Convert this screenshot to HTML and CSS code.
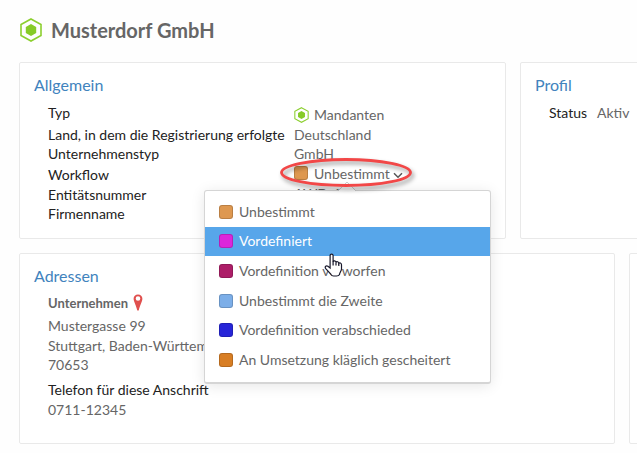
FILE: index.html
```html
<!DOCTYPE html>
<html lang="de">
<head>
<meta charset="utf-8">
<title>Musterdorf GmbH</title>
<link rel="stylesheet" href="styles.css">
</head>
<body>
<header class="page-head">
  <svg class="hex hex-large" viewBox="0 0 22 24"><path class="hex-line" d="M11 1 21 6.5V17.5L11 23 1 17.5V6.5Z"/><path class="hex-core" d="M11 6 16.2 9V15L11 18 5.8 15V9Z"/></svg>
  <h1>Musterdorf GmbH</h1>
</header>
<main>
  <div class="row row-general">
    <section class="card">
      <h2>Allgemein</h2>
      <dl class="fields">
        <dt>Typ</dt>
        <dd class="type-value"><svg class="hex" viewBox="0 0 22 24"><path class="hex-line" d="M11 1 21 6.5V17.5L11 23 1 17.5V6.5Z"/><path class="hex-core" d="M11 6 16.2 9V15L11 18 5.8 15V9Z"/></svg>Mandanten</dd>
        <dt>Land, in dem die Registrierung erfolgte</dt><dd>Deutschland</dd>
        <dt>Unternehmenstyp</dt><dd>GmbH</dd>
        <dt class="workflow-label">Workflow</dt>
        <dd class="workflow"><span class="swatch orange"></span><span class="state">Unbestimmt</span><svg class="chevron" viewBox="0 0 10 7"><path d="M1 1.2 5 5.2 9 1.2"/></svg>
          <svg class="ring" viewBox="0 0 144 42"><ellipse cx="70" cy="16.5" rx="64.5" ry="13"/></svg>
          <div class="menu">
            <svg class="menu-tip" viewBox="0 0 20 10"><path d="M1 10 10 1 19 10"/></svg>
            <div class="item"><span class="swatch orange"></span>Unbestimmt</div>
            <div class="item selected"><span class="swatch magenta"></span>Vordefiniert</div>
            <div class="item"><span class="swatch crimson"></span>Vordefinition verworfen</div>
            <div class="item"><span class="swatch sky"></span>Unbestimmt die Zweite</div>
            <div class="item"><span class="swatch blue"></span>Vordefinition verabschieded</div>
            <div class="item"><span class="swatch amber"></span>An Umsetzung kläglich gescheitert</div>
            <svg class="cursor" viewBox="0 0 19 25"><path d="M6.1 15V2.8C6.1.5 9.1.5 9.1 2.8V9C9.4 7.4 12 7.6 12 9.5 12.5 8.2 14.8 8.6 14.8 10.4 15.5 9.4 17.5 9.9 17.5 11.8V16C17.5 18 15.5 19.5 15.5 21.5 15 22.5 14 23 12.5 23H9.5C8 23 7.4 22.2 6.8 21.2L1.7 15.6C.3 13.6 2.4 12.1 3.9 13.3Z"/><path d="M9.1 8.5V12.5M12 9.5V12.5M14.8 10.4V13"/></svg>
          </div>
        </dd>
        <dt>Entitätsnummer</dt><dd class="entity-value">AWD-1</dd>
        <dt>Firmenname</dt><dd></dd>
      </dl>
    </section>
    <section class="card">
      <h2>Profil</h2>
      <dl class="status"><dt>Status</dt><dd>Aktiv</dd></dl>
    </section>
  </div>
  <div class="row row-address">
    <section class="card">
      <h2>Adressen</h2>
      <div class="address">
        <h3>Unternehmen <svg class="pin" viewBox="0 0 10 17"><path fill-rule="evenodd" d="M5 .5C2.4.5.6 2.4.6 4.8.6 7.3 3.2 11.8 4.3 16.5H5.7C6.8 11.8 9.4 7.3 9.4 4.8 9.4 2.4 7.6.5 5 .5ZM5 2.2A2.3 2.3 0 1 1 5 6.8 2.3 2.3 0 0 1 5 2.2Z"/></svg></h3>
        <p class="street">Mustergasse 99</p>
        <p>Stuttgart, Baden-Württemberg</p>
        <p class="postcode">70653</p>
        <p class="phone-label">Telefon für diese Anschrift</p>
        <p>0711-12345</p>
      </div>
    </section>
    <section class="card"></section>
  </div>
</main>
</body>
</html>
```
FILE: styles.css
```css
* { box-sizing: border-box; }
body {
  margin: 0;
  width: 637px;
  height: 453px;
  overflow: hidden;
  background: #fefefe;
  color: #666;
  font: 14px/20px Lato, sans-serif;
}
h1, h2, h3, p, dl, dd { margin: 0; }
svg { display: block; flex: none; }
.page-head {
  display: flex;
  align-items: center;
  gap: 9px;
  height: 62px;
  padding: 0 0 2px 20px;
}
h1 { font-size: 20px; line-height: 24px; font-weight: 700; }
.hex { width: 15px; height: 16px; }
.hex-large { width: 22px; height: 24px; }
.hex-line { fill: none; stroke: #8ccf2f; stroke-width: 1.6; }
.hex-core { fill: #86cb27; }
.row { display: grid; column-gap: 14px; }
.row-general { grid-template-columns: 487px 130px; height: 177px; margin: 0 0 14px 19px; }
.row-address { grid-template-columns: 596px 30px; height: 191px; margin-left: 19px; }
.card { border: 1px solid #e9e9e9; border-radius: 2px; background: #fff; padding: 11px 14px; }
h2 { color: #4183bd; font-size: 16px; line-height: 22px; font-weight: 400; }
.fields {
  display: grid;
  grid-template-columns: 246px 1fr;
  grid-template-rows: 22px 19px 20px 21px 19px 20px;
  padding: 7px 0 0 14px;
}
dt { color: #222; white-space: nowrap; }
.workflow-label { padding-top: 1px; }
.type-value { display: flex; align-items: center; gap: 5px; height: 24px; }
.workflow { position: relative; display: flex; height: 20px; }
.swatch { width: 14px; height: 14px; border: 1px solid rgba(0,0,0,.16); border-radius: 3px; flex: none; }
.workflow > .swatch { margin-top: 2px; }
.state { margin-left: 6px; }
.chevron { width: 10px; height: 7px; margin: 8px 0 0 3px; fill: none; stroke: #555; stroke-width: 1.5; }
.ring { position: absolute; z-index: 3; left: -18px; top: -8px; width: 144px; height: 42px; fill: none; stroke: #f24747; stroke-width: 2.8; filter: drop-shadow(2px 3px 2px rgba(0,0,0,.4)); }
.orange { background: #de9850; }
.magenta { background: #db26db; }
.crimson { background: #ad1e68; }
.sky { background: #7caee8; }
.blue { background: #2725d8; }
.amber { background: #d87e24; }
.menu {
  position: absolute;
  z-index: 2;
  left: -90px;
  top: 26px;
  width: 287px;
  height: 194px;
  padding: 6px 0;
  border: 1px solid #d5d5d5;
  border-bottom-width: 2px;
  border-radius: 3px;
  background: #fff;
  box-shadow: 0 2px 14px rgba(0,0,0,.1);
}
.item { display: flex; align-items: center; gap: 6px; height: 29.6px; padding-left: 14px; white-space: nowrap; }
.selected { background: #57a6ea; color: #fff; }
.menu-tip { position: absolute; left: 132px; top: -10px; width: 20px; height: 10px; fill: #fff; stroke: #ccc; }
.cursor { position: absolute; left: 119px; top: 62px; width: 19px; height: 25px; fill: #fff; stroke: #18182b; stroke-width: 1.2; }
.entity-value { margin-top: -1px; }
.status { display: flex; gap: 10px; padding: 7px 0 0 14px; }
.address { padding: 5px 0 0 14px; }
h3 { display: flex; align-items: center; gap: 5px; font-size: 13px; line-height: 20px; height: 22px; }
.pin { width: 10px; height: 17px; margin-top: -1px; fill: #e0504e; }
.address p { white-space: nowrap; }
.address .street { margin-top: 2px; }
.address .postcode { margin-top: -1px; }
.address .phone-label { color: #222; margin-top: 5px; }
```
